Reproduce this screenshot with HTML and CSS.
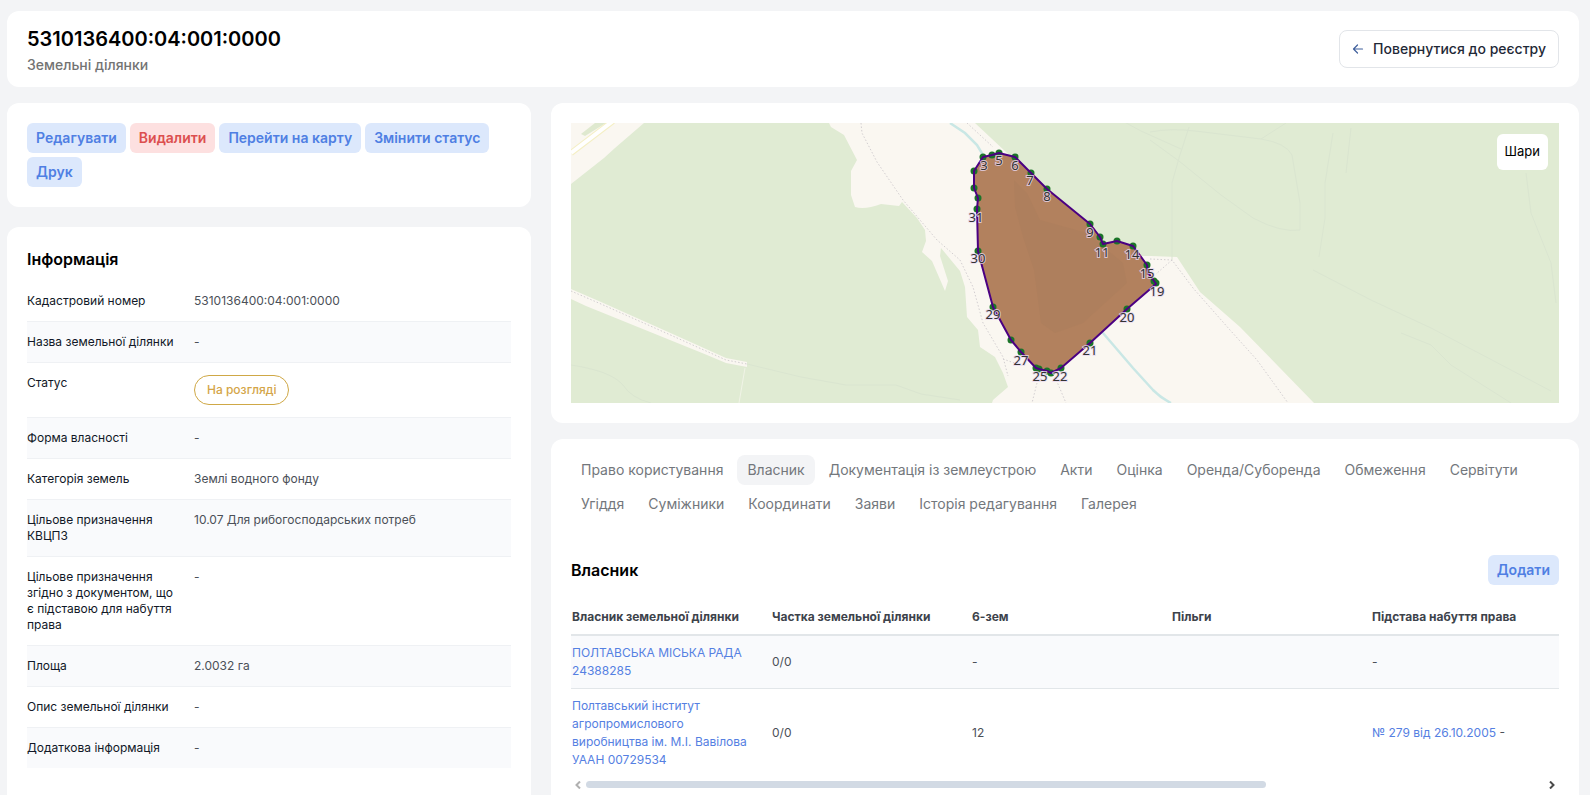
FILE: index.html
```html
<!DOCTYPE html>
<html lang="uk">
<head>
  <meta charset="utf-8">
  <title>Земельні ділянки</title>
  <link rel="stylesheet" href="styles.css">
</head>
<body>
<header class="card header">
  <div>
    <h1 class="header-title">5310136400:04:001:0000</h1>
    <div class="header-sub">Земельні ділянки</div>
  </div>
  <a class="back" href="#">
    <svg class="back-icon" width="12" height="12" viewBox="0 0 12 12" fill="none" stroke="#3f5f9c" stroke-width="1.2" stroke-linecap="round" stroke-linejoin="round"><path d="M10.5 6H1.5M5.5 2L1.5 6l4 4"/></svg>
    Повернутися до реєстру
  </a>
</header>

<main class="layout">
  <div class="side">
    <div class="card actions">
      <button class="btn">Редагувати</button>
      <button class="btn btn-danger">Видалити</button>
      <button class="btn">Перейти на карту</button>
      <button class="btn">Змінити статус</button>
      <button class="btn">Друк</button>
    </div>
    <div class="card info">
      <h2 class="title">Інформація</h2>
      <dl class="info-list">
        <div class="info-row"><dt>Кадастровий номер</dt><dd>5310136400:04:001:0000</dd></div>
        <div class="info-row"><dt>Назва земельної ділянки</dt><dd>-</dd></div>
        <div class="info-row"><dt>Статус</dt><dd><span class="status">На розгляді</span></dd></div>
        <div class="info-row"><dt>Форма власності</dt><dd>-</dd></div>
        <div class="info-row"><dt>Категорія земель</dt><dd>Землі водного фонду</dd></div>
        <div class="info-row"><dt>Цільове призначення КВЦПЗ</dt><dd>10.07 Для рибогосподарських потреб</dd></div>
        <div class="info-row"><dt>Цільове призначення згідно з документом, що є підставою для набуття права</dt><dd>-</dd></div>
        <div class="info-row"><dt>Площа</dt><dd>2.0032 га</dd></div>
        <div class="info-row"><dt>Опис земельної ділянки</dt><dd>-</dd></div>
        <div class="info-row"><dt>Додаткова інформація</dt><dd>-</dd></div>
      </dl>
    </div>
  </div>

  <div class="content">
    <div class="card map-card">
      <div class="map">
        <svg class="map-svg" viewBox="0 0 988 280" preserveAspectRatio="xMidYMid slice">
          <rect width="988" height="280" fill="#e0ebd3"/>
          <!-- fields -->
          <g fill="#faf7f1">
            <path d="M0 0H73L44 25L33 35L0 61Z"/>
            <path d="M0 166L30 179L95 208L155 235L176 239V244L155 240L136 232L15 183L0 176Z"/>
            <path d="M258 0L260 4L273 12L286 37L280 48V72L284 84Q294 87 310 81L328 83L331 79L346 95L354 107L355 118L351 129L361 138L374 168L377 158L369 133L370 125L389 148L394 164L396 194L407 207L409 224L424 234L432 250L437 264L422 277L421 280H743L669 204L629 169L606 134L580 133L540 133L436 30L404 0Z"/>
          </g>
          <path d="M10 11L24 0H35L14 13Z" fill="#dfe9cf"/>
          <path d="M0 30L42 -2" stroke="#f4efc4" stroke-width="6"/>
          <path d="M0 30L42 -2" stroke="#fff" stroke-width="4"/>
          <path d="M174 245L168 280" stroke="#f0f3e6"/>
          <!-- river -->
          <path d="M379 0L394 10L406 22L412 32L470 130L532 210L562 245L582 267Q590 275 600 280" fill="none" stroke="#c9e7e5" stroke-width="2.5"/>
          <!-- paths -->
          <g fill="none" stroke="#d3cfd1" stroke-dasharray="1.5 2">
            <path d="M0 168L30 181L95 210L155 237L176 241"/>
            <path d="M290 0L291 10L306 39L332 77L366 117L389 137L402 164L412 200L432 234L437 253"/>
            <path d="M396 0L422 24"/>
            <path d="M579 136L601 137L622 165L659 207L686 237L717 280M601 137L585 151"/>
            <path d="M432 236L449 242M466 260L461 280M484 254L495 280"/>
          </g>
          <g fill="none" stroke="#dae5d0">
            <path d="M0 242Q40 248 52 262Q60 275 80 280M176 241L230 254L275 262H325L350 271L389 277"/>
            <path d="M579 9Q600 5 624 8L690 16Q715 20 721 32L729 80V107Q710 110 682 95L650 72L608 38L579 17"/>
            <path d="M601 137V60L608 35L618 4M748 134L754 95V60L762 10M775 50L780 5M690 16L715 0"/>
            <path d="M742 147L800 177L860 205L980 268M830 210L860 222L880 242L940 280M955 50L960 90L980 140L985 180"/>
            <path d="M546 -5L570 8L610 26"/>
          </g>
          <!-- parcel -->
          <path d="M412 34L421 32L428 30L444 34L460 50L476 66L519 101L529 114L532 121L546 118L562 123L576 142L583 158L585 160L556 186L519 220L490 245L480 250L476 248L468 246L465 245L450 229L440 217L422 184L407 128L406 86L407 75L403 65V48Z" fill="#b2815e"/>
          <path d="M443 57L456 70L469 97L516 110L552 140L556 160L512 200L484 210L470 200L463 147L452 114L444 84Z" fill="#ae7f5d"/>
          <g fill="#1b7428">
            <circle cx="412" cy="34" r="3.5"/><circle cx="421" cy="32" r="3.5"/><circle cx="428" cy="30" r="3.5"/>
            <circle cx="444" cy="34" r="3.5"/><circle cx="460" cy="50" r="3.5"/><circle cx="476" cy="66" r="3.5"/>
            <circle cx="519" cy="101" r="3.5"/><circle cx="529" cy="114" r="3.5"/><circle cx="532" cy="121" r="3.5"/>
            <circle cx="546" cy="118" r="3.5"/><circle cx="562" cy="123" r="3.5"/><circle cx="576" cy="142" r="3.5"/>
            <circle cx="583" cy="158" r="3.5"/><circle cx="585" cy="160" r="3.5"/><circle cx="556" cy="186" r="3.5"/>
            <circle cx="519" cy="220" r="3.5"/><circle cx="490" cy="245" r="3.5"/><circle cx="480" cy="250" r="3.5"/>
            <circle cx="476" cy="248" r="3.5"/><circle cx="468" cy="246" r="3.5"/><circle cx="465" cy="245" r="3.5"/>
            <circle cx="450" cy="229" r="3.5"/><circle cx="440" cy="217" r="3.5"/><circle cx="422" cy="184" r="3.5"/>
            <circle cx="407" cy="128" r="3.5"/><circle cx="406" cy="86" r="3.5"/><circle cx="407" cy="75" r="3.5"/>
            <circle cx="403" cy="65" r="3.5"/><circle cx="403" cy="48" r="3.5"/>
          </g>
          <path d="M412 34L421 32L428 30L444 34L460 50L476 66L519 101L529 114L532 121L546 118L562 123L576 142L577 150L583 158L585 161L556 186L519 220L490 245L480 250L476 248L468 246L465 245L450 229L440 217L422 184L407 128L406 86L407 75L403 65V48Z" fill="none" stroke="#4b0082" stroke-width="2" stroke-linejoin="round"/>
          <g class="map-labels">
            <text x="413" y="47">3</text><text x="428" y="42">5</text><text x="444" y="47">6</text>
            <text x="459" y="62">7</text><text x="476" y="78">8</text><text x="519" y="114">9</text>
            <text x="531" y="134">11</text><text x="561" y="136">14</text><text x="576" y="155">15</text>
            <text x="586" y="173">19</text><text x="556" y="199">20</text><text x="519" y="232">21</text>
            <text x="489" y="258">22</text><text x="469" y="258">25</text><text x="450" y="242">27</text>
            <text x="422" y="196">29</text><text x="407" y="140">30</text><text x="405" y="99">31</text>
          </g>
        </svg>
        <button class="layers">Шари</button>
      </div>
    </div>

    <div class="card details">
      <nav class="tabs">
        <a class="tab" href="#">Право користування</a>
        <a class="tab active" href="#">Власник</a>
        <a class="tab" href="#">Документація із землеустрою</a>
        <a class="tab" href="#">Акти</a>
        <a class="tab" href="#">Оцінка</a>
        <a class="tab" href="#">Оренда/Суборенда</a>
        <a class="tab" href="#">Обмеження</a>
        <a class="tab" href="#">Сервітути</a>
        <a class="tab" href="#">Угіддя</a>
        <a class="tab" href="#">Суміжники</a>
        <a class="tab" href="#">Координати</a>
        <a class="tab" href="#">Заяви</a>
        <a class="tab" href="#">Історія редагування</a>
        <a class="tab" href="#">Галерея</a>
      </nav>
      <div class="section-head">
        <h2 class="title">Власник</h2>
        <button class="btn">Додати</button>
      </div>
      <div class="table-wrap">
        <table class="table">
          <thead>
            <tr>
              <th>Власник земельної ділянки</th>
              <th>Частка земельної ділянки</th>
              <th>6-зем</th>
              <th>Пільги</th>
              <th>Підстава набуття права</th>
              <th></th>
              <th></th>
            </tr>
          </thead>
          <tbody>
            <tr>
              <td><a href="#">ПОЛТАВСЬКА МІСЬКА РАДА 24388285</a></td>
              <td>0/0</td>
              <td>-</td>
              <td></td>
              <td>-</td>
              <td></td>
              <td></td>
            </tr>
            <tr>
              <td><a href="#">Полтавський інститут агропромислового виробництва ім. М.І. Вавілова УААН 00729534</a></td>
              <td>0/0</td>
              <td>12</td>
              <td></td>
              <td><a href="#">№ 279 від 26.10.2005</a> -</td>
              <td></td>
              <td></td>
            </tr>
          </tbody>
        </table>
      </div>
      <div class="scroll">
        <svg width="6" height="8" viewBox="0 0 6 8" fill="none" stroke="#b0b0b0" stroke-width="2"><path d="M5 .5L1.5 4L5 7.5"/></svg>
        <div class="scroll-track"><div class="scroll-thumb"></div></div>
        <svg width="6" height="8" viewBox="0 0 6 8" fill="none" stroke="#4a4a4a" stroke-width="2"><path d="M1 .5L4.500 4L1 7.500"/></svg>
      </div>
    </div>
  </div>
</main>
</body>
</html>
```
FILE: styles.css
```css
* {
  box-sizing: border-box;
}
body {
  margin: 0;
  padding: 11px 11px 0 7px;
  background: #f3f4f6;
  font-family: Inter, "Liberation Sans", sans-serif;
  font-size: 12px;
  line-height: 16px;
  color: #111827;
}
h1, h2, dl, dd {
  margin: 0;
}
a {
  color: #5580e2;
  text-decoration: none;
}
button {
  font-family: inherit;
  cursor: pointer;
}
.card {
  background: #fff;
  border-radius: 12px;
  padding: 20px;
}
.header {
  display: flex;
  justify-content: space-between;
  align-items: center;
  padding: 14px 20px 10px;
  margin-bottom: 16px;
}
.header-title {
  font-size: 20px;
  line-height: 28px;
  font-weight: 600;
  color: #000;
}
.header-sub {
  font-size: 14px;
  line-height: 24px;
  font-weight: 500;
  color: #737373;
}
.back {
  display: flex;
  align-items: center;
  gap: 9px;
  height: 38px;
  margin-bottom: 4px;
  padding: 0 12px;
  border: 1px solid #e2e5e9;
  border-radius: 8px;
  font-size: 14px;
  font-weight: 500;
  color: #1f2937;
}
.layout {
  display: grid;
  grid-template-columns: 1fr 2fr;
}
.side {
  display: flex;
  flex-direction: column;
  gap: 20px;
  min-width: 0;
}
.content {
  display: flex;
  flex-direction: column;
  gap: 16px;
  min-width: 0;
  padding-left: 20px;
}
.actions {
  display: flex;
  flex-wrap: wrap;
  gap: 4px;
}
.btn {
  height: 30px;
  padding: 0 9px 2px;
  border: 0;
  border-radius: 6px;
  background: #dce8fc;
  color: #4f7fe3;
  font-size: 14px;
  font-weight: 600;
}
.btn-danger {
  background: #fde0e0;
  color: #dc4f4f;
}
.title {
  font-size: 16px;
  line-height: 24px;
  font-weight: 600;
  color: #000;
}
.info {
  flex: 1;
  padding-bottom: 40px;
}
.info-list {
  margin-top: 10px;
}
.info-row {
  display: grid;
  grid-template-columns: 151px 1fr;
  gap: 16px;
  padding: 12px 0;
  border-bottom: 1px solid #eff1f4;
}
.info-row:last-child {
  border-bottom: 0;
}
.info-row:nth-child(even) {
  background: #f9fafc;
}
.info-row dd {
  color: #4b5058;
}
.status {
  display: inline-flex;
  align-items: center;
  height: 30px;
  padding: 0 12px;
  border: 1px solid #cfa846;
  border-radius: 15px;
  color: #d4a548;
  font-weight: 500;
  vertical-align: top;
}
.map {
  position: relative;
  height: 280px;
}
.map-svg {
  display: block;
  width: 100%;
  height: 100%;
}
.map-labels {
  font-family: "Noto Sans", sans-serif;
  font-size: 13px;
  text-anchor: middle;
  fill: #333;
  stroke: rgba(232, 215, 240, 0.8);
  stroke-width: 2px;
  paint-order: stroke;
}
.layers {
  position: absolute;
  top: 11px;
  right: 11px;
  height: 36px;
  padding: 0 8px 2px;
  border: 0;
  border-radius: 6px;
  background: #fff;
  color: #000;
  font-size: 13px;
}
.details {
  flex: 1;
  padding-top: 16px;
}
.tabs {
  display: flex;
  flex-wrap: wrap;
  gap: 4px;
}
.tab {
  padding: 0 10px;
  border-radius: 8px;
  font-size: 14px;
  line-height: 30px;
  color: #73777c;
}
.tab.active {
  background: #f3f4f6;
}
.section-head {
  display: flex;
  justify-content: space-between;
  align-items: center;
  margin: 36px 0 14px;
}
.table-wrap {
  overflow: hidden;
}
.table {
  width: 1400px;
  table-layout: fixed;
  border-collapse: separate;
  border-spacing: 0;
  line-height: 18px;
}
.table th {
  height: 37px;
  padding: 0 1px;
  border-bottom: 2px solid #e2e6e9;
  text-align: left;
  font-weight: 700;
  color: #3d434b;
}
.table td {
  padding: 8px 24px 8px 1px;
  color: #4b5058;
}
.table tbody tr:nth-child(odd) td {
  background: #f9fafc;
  border-bottom: 1px solid #e2e6e9;
}
.scroll {
  display: flex;
  align-items: center;
  gap: 5px;
  height: 15px;
  padding: 0 4px;
}
.scroll-track {
  flex: 1;
}
.scroll-thumb {
  width: 71%;
  height: 7px;
  border-radius: 4px;
  background: #d2dae4;
}
```
